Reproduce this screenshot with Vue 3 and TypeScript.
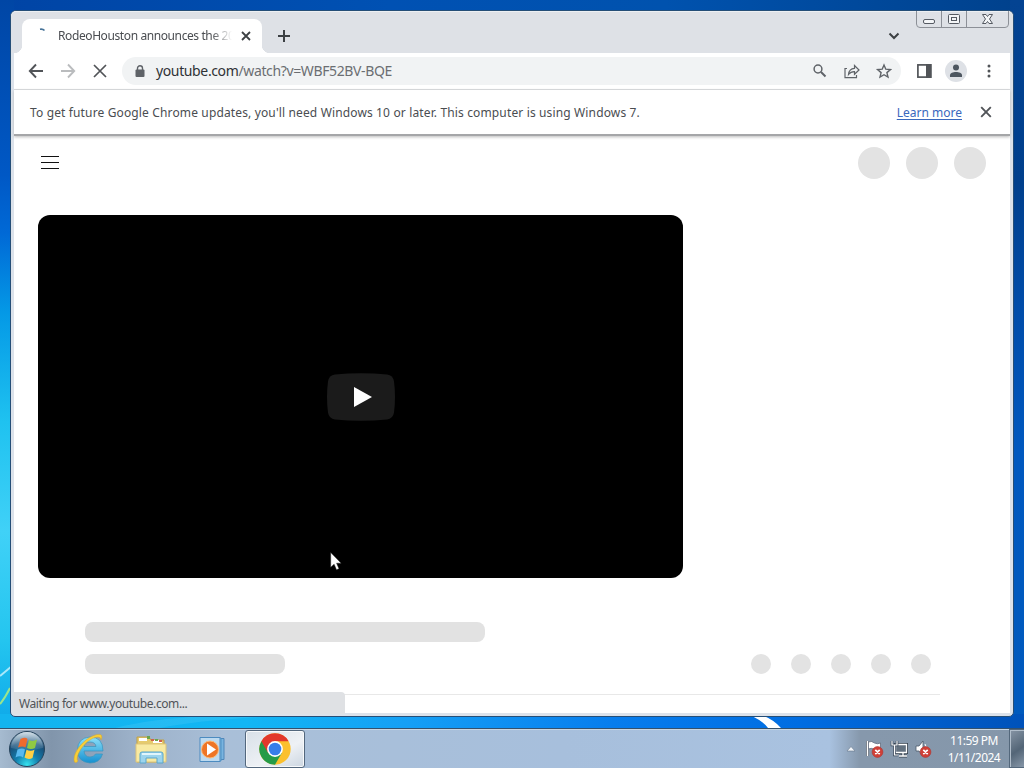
<script setup lang="ts">
const title = 'RodeoHouston announces the 20'
const headerDots: number[] = [1, 2, 3]
const actionDots: number[] = [1, 2, 3, 4, 5]
</script>

<template>
  <div class="desktop">
    <div class="wallpaper">
      <svg class="streaks" width="1024" height="728" viewBox="0 0 1024 728">
        <path d="M0 676 Q6 671 12 666" stroke="#a9e8fa" stroke-width="2" fill="none" />
        <path d="M0 704 Q5 698 10 688" stroke="#9be58c" stroke-width="2" fill="none" />
        <path d="M115 728 Q150 719 205 716 L280 716 Q200 720 160 728Z" fill="#5cd1f6" opacity=".25" />
        <path d="M752 716 L764 716 Q774 720 781 728 L768 728 Q764 722 752 716Z" fill="#fff" />
      </svg>
      <section class="window">
        <header class="tabstrip">
          <div class="tab">
            <svg class="spinner" width="16" height="16" viewBox="0 0 16 16"><path d="M6 1.200 Q9 .7 10.500 2.600" fill="none" stroke="#477398" stroke-width="1.600" /></svg>
            <span class="tab-title">{{ title }}</span>
            <svg class="tab-close" width="10" height="10" viewBox="0 0 10 10"><path d="M1 1 9 9M9 1 1 9" stroke="#3c4043" stroke-width="1.800" /></svg>
          </div>
          <svg class="plus" width="12" height="12" viewBox="0 0 12 12"><path d="M6 0V12M0 6H12" stroke="#3c4043" stroke-width="2" /></svg>
          <svg class="chevron" width="12" height="8" viewBox="0 0 12 8"><path d="m1.500 1.500 4.500 4.500 4.500-4.500" fill="none" stroke="#3c4043" stroke-width="2" /></svg>
          <svg class="caption" width="94" height="18" viewBox="0 0 94 18">
            <path d="M.5 0V13Q.5 16.500 4 16.500H89Q92.500 16.500 92.500 13V0M25.500 0V16.500M50.500 0V16.500" fill="none" stroke="#8c9097" />
            <g fill="#f3f5f7" stroke="#555a62" stroke-width="1">
              <rect x="7.500" y="8.500" width="11" height="4" rx="1.500" />
              <rect x="32.500" y="3.500" width="11" height="9" rx="1" /><rect x="35.500" y="6.500" width="5" height="3" />
              <path d="M66.500 3.500h3.500l1.500 2 1.500-2h3.500l-3 4.500 3 4.500h-3.500l-1.500-2-1.500 2h-3.500l3-4.500z" />
            </g>
          </svg>
        </header>
        <div class="toolbar">
          <svg class="nav" width="92" height="20" viewBox="0 0 92 20" fill="none" stroke="#515458" stroke-width="1.900">
            <path d="M15 10H2M8 3.500 1.800 10 8 16.500" /><path d="M33 10H46M40 3.500 46.200 10 40 16.500" stroke="#babcbe" /><path d="M66 4 78 16M78 4 66 16" stroke-width="1.700" />
          </svg>
          <div class="omnibox">
            <svg class="lock" width="10" height="13" viewBox="0 0 10 13"><rect x=".500" y="4.500" width="9" height="7.500" rx="1" fill="#5f6368" /><path d="M2.500 5V3.300a2.500 2.500 0 0 1 5 0V5" fill="none" stroke="#5f6368" stroke-width="1.400" /></svg>
            <span class="url"><b>youtube.com</b>/watch?v=WBF52BV-BQE</span>
            <svg class="omni-icons" width="80" height="18" viewBox="0 0 80 18" fill="none" stroke="#5f6368" stroke-width="1.500">
              <circle cx="6" cy="7" r="3.900" /><path d="m9 10 4.500 4.500" stroke-width="1.900" />
              <path d="M35 6.500H33V15.700H44.500V13" stroke-width="1.200" /><path d="M36.500 12.500Q37 6.700 42.500 6.300V3.500L47 8l-4.500 4.300V9.600Q38.800 9.500 36.500 12.500Z" stroke-width="1.200" />
              <path d="m72 3 1.800 4.200 4.600.4-3.500 3 1.100 4.500-4-2.400-4 2.400 1.100-4.500-3.500-3 4.600-.4z" stroke-width="1.400" />
            </svg>
          </div>
          <svg class="side" width="15" height="14" viewBox="0 0 15 14"><rect x=".9" y=".9" width="12.800" height="12.200" fill="#fff" stroke="#515458" stroke-width="1.700" /><path d="M9 0h5.500v14H9z" fill="#515458" /></svg>
          <span class="avatar"><svg width="14" height="14" viewBox="0 0 14 14" fill="#4d5660"><circle cx="7" cy="3.500" r="3" /><path d="M1 13V11.200C1 8.900 4 8 7 8s6 .9 6 3.200V13z" /></svg></span>
          <svg class="kebab" width="4" height="14" viewBox="0 0 4 14" fill="#515458"><circle cx="2" cy="2" r="1.500" /><circle cx="2" cy="7" r="1.500" /><circle cx="2" cy="12" r="1.500" /></svg>
        </div>
        <div class="infobar">
          <span class="notice">To get future Google Chrome updates, you'll need Windows 10 or later. This computer is using Windows 7.</span>
          <a class="learn">Learn more</a>
          <svg class="dismiss" width="12" height="12" viewBox="0 0 12 12"><path d="M1.200 1.200 10.800 10.800M10.800 1.200 1.200 10.800" stroke="#515458" stroke-width="1.900" /></svg>
        </div>
        <main class="page">
          <div class="masthead">
            <div class="burger"><i /><i /><i /></div>
            <div class="head-dots"><i v-for="d in headerDots" :key="d" /></div>
          </div>
          <div class="player">
            <svg width="68" height="48" viewBox="0 0 68 48"><path d="M8 1.500Q34-1 60 1.500q6 .7 7 7 2 15.500 0 31-1 6.300-7 7-26 2.500-52 0-6-.7-7-7-2-15.500 0-31 1-6.300 7-7Z" fill="#1b1b1b" /><path d="M27 14 45 24 27 34z" fill="#fff" /></svg>
          </div>
          <div class="bar wide" />
          <div class="meta"><div class="bar narrow" /><div class="action-dots"><i v-for="d in actionDots" :key="d" /></div></div>
          <div class="rule" />
        </main>
        <div class="status">Waiting for www.youtube.com...</div>
      </section>
      <svg class="cursor" width="13" height="19" viewBox="0 0 13 19"><path d="M.7.500V15.300L4.100 12.200 6.500 17.800 9 16.700 6.600 11.200H11.200Z" fill="#fff" stroke="#222" stroke-width=".5" /></svg>
    </div>
    <footer class="taskbar">
      <svg class="start" width="38" height="38" viewBox="0 0 38 38">
        <defs>
          <radialGradient id="orb" cx=".5" cy=".95" r=".95"><stop stop-color="#35e3ef" /><stop offset=".35" stop-color="#137fae" /><stop offset=".7" stop-color="#1a4f78" /><stop offset="1" stop-color="#8ba7bb" /></radialGradient>
          <linearGradient id="shine" x2="0" y2="1"><stop stop-color="#e1eaf0" stop-opacity=".85" /><stop offset="1" stop-color="#8fb0c5" stop-opacity=".15" /></linearGradient>
        </defs>
        <circle cx="19" cy="19" r="17.500" fill="url(#orb)" stroke="#26435b" /><path d="M3 18a16 16 0 0 1 32 0Q19 22 3 18Z" fill="url(#shine)" />
        <path d="M12.500 9q5-2.500 7 0l-2 8.500q-3-2-7.500 0Z" fill="#ee6a2e" /><path d="M21 10q4 2 8-.5l-2 8.500q-4 2-8 0Z" fill="#90c943" />
        <path d="M9.500 19.500q5-2 7.500 0l-2 8q-3-2.500-7.500 0Z" fill="#58b9ef" /><path d="M18.500 19.700q4 2 8 0l-2 8.300q-4 2-8-.5Z" fill="#ffd044" />
      </svg>
      <svg class="ie" width="32" height="32" viewBox="0 0 32 32">
        <defs><linearGradient id="blue" x2="0" y2="1"><stop stop-color="#8be0fa" /><stop offset="1" stop-color="#1590d0" /></linearGradient></defs>
        <path d="M30 18H11q.5 6 6 6 4 0 5.500-3h7Q27 30 17 30 4.500 29 4.500 17T17 4Q30 4 30 18ZM11 13.500H23q-.7-4.500-6-4.500t-6 4.500Z" fill="url(#blue)" stroke="#3a94bc" stroke-width=".7" />
        <path d="M1.500 29C-1 22 7 11 15 5.500 20 2 27 0 28.500 2.500q.8 2-.5 4.500 0-3-3-3Q20 4 14 9 6.500 16 4.500 23 3.500 27 5 28q-2 2.500-3.500 1Z" fill="#f9ce35" stroke="#d6a62a" stroke-width=".5" />
      </svg>
      <svg class="folder" width="33" height="30" viewBox="0 0 33 30">
        <path d="M2 2h12l2 3h13v22H2z" fill="#e6cb6d" stroke="#bea04a" /><path d="M4 3h8v3H4zM18 5h9v3h-9z" fill="#fff" /><path d="M12 1h3v3h-3zM20 4h3v2h-3z" fill="#6aa64c" /><path d="M16 4h3v2h-3zM24 5h3v2h-3z" fill="#d0624b" />
        <path d="M1 9h30v18H1z" fill="#f8eaa2" stroke="#dfc578" /><path d="M5 28V19q0-2 2-2h19q2 0 2 2v9h-6v-5H11v5z" fill="#9cd4ed" stroke="#5aa6cc" /><path d="M7 19h19" stroke="#e0f5fc" stroke-width="2" />
      </svg>
      <svg class="media" width="28" height="27" viewBox="0 0 28 27">
        <path d="M6 2.500h19v21H6z" fill="#79b4df" stroke="#5087b9" /><path d="M4 2h18v23H4z" fill="#9acbea" stroke="#4e91c5" /><path d="M1 1.500h20v24H1z" fill="#bddaf0" stroke="#4c8bc0" />
        <circle cx="11" cy="13.500" r="8.500" fill="#ee7526" stroke="#fbba78" /><path d="M8 7.500v12l9-6z" fill="#fff" />
      </svg>
      <div class="task-active">
        <svg width="32" height="32" viewBox="0 0 32 32">
          <circle cx="16" cy="16" r="15.700" fill="#fbc02d" />
          <path d="M16 16 2.400 8.150A15.700 15.700 0 0 0 16 31.700L22.800 19.900Z" fill="#259b48" />
          <path d="M2.400 8.150A15.700 15.700 0 0 1 29.600 8.150H16L9.200 19.900Z" fill="#e2372b" />
          <circle cx="16" cy="16" r="7.900" fill="#fff" /><circle cx="16" cy="16" r="6.300" fill="#377ee9" />
        </svg>
      </div>
      <div class="tray">
        <svg width="92" height="20" viewBox="0 0 92 20">
          <path d="M1 12H9L5 7.500Z" fill="#f4f7fa" stroke="#67778b" stroke-width=".6" />
          <path d="M21.500 2v15" stroke="#3b4555" stroke-width="3" /><path d="M21.500 2v15" stroke="#fff" stroke-width="1.700" /><path d="M22.500 3q3-1.500 6 1 3 1.500 6 0v7q-3 1-6-.5-3-2-6-.5Z" fill="#fff" stroke="#596375" stroke-width=".7" />
          <path d="M49.500 5.500h11v8h-11zM53 17h8M57 14v3" fill="#506070" stroke="#35404c" stroke-width="3" /><path d="M49.500 5.500h11v8h-11zM53 17h8M57 14v3" fill="#63717f" stroke="#fff" stroke-width="1.300" /><path d="M46 2v4h5V2M48.500 6v10H52" fill="none" stroke="#334255" stroke-width="2.600" /><path d="M46 2v4h5V2M48.500 6v10H52" fill="none" stroke="#fff" stroke-width="1.200" />
          <path d="M70 7h3l4-5v15l-4-5h-3z" fill="#fff" stroke="#49586a" stroke-width=".8" /><path d="M79 5q3 4 0 8" fill="none" stroke="#fff" />
          <g fill="#cf4038" stroke="#b0302c" stroke-width=".6"><circle cx="31.500" cy="13" r="5.400" /><circle cx="79.500" cy="13" r="5.400" /></g>
          <path d="m29.300 10.800 4.400 4.400m0-4.400-4.400 4.400M77.300 10.800l4.400 4.400m0-4.400-4.400 4.400" stroke="#fff" stroke-width="1.700" />
        </svg>
        <div class="clock"><span>11:59 PM</span><span class="date">1/11/2024</span></div>
        <div class="peek" />
      </div>
    </footer>
  </div>
</template>

<style>
body { margin: 0; overflow: hidden; }
</style>

<style scoped>
* { box-sizing: border-box; }
svg { display: block; flex: none; }
.desktop { width: 1024px; height: 768px; display: flex; flex-direction: column; font-family: "Noto Sans", "Open Sans", sans-serif; font-size: 12px; color: #4a4d51; }
.wallpaper {
  position: relative; height: 728px; padding: 10px 10px 11px 10px;
  background:
    linear-gradient(90deg, #13b4ef 0, #12b6f4 24%, #159ff5 40%, #077ded 60%, #006de2 78%, #0052ba) 0 100% / 100% 14px no-repeat,
    linear-gradient(#0046a5, #0058c5 24%, #0069d6 32%, #0499e6 43%, #1fc2f0 58%, #40d1f7 73%, #24c5ef 88%, #0da7e9) 0 0 / 14px 100% no-repeat,
    linear-gradient(#044392, #003f8c 25%, #004ca9 42%, #0058bf 62%, #005abd) 100% 0 / 14px 100% no-repeat,
    linear-gradient(90deg, #0044a5, #0051b3 38%, #0052ae 65%, #00418c);
}
.streaks { position: absolute; inset: 0; }
.window { position: relative; width: 1004px; height: 707px; display: flex; flex-direction: column; overflow: hidden; padding: 0 3px 3px; border: 1px solid #254e77; border-radius: 6px 6px 5px 5px; background: #dce2ea; }
.tabstrip { display: flex; height: 42px; margin: 0 -3px; padding: 8px 0 0 11px; background: #dee1e6; border-radius: 5px 5px 0 0; box-shadow: inset 0 1px #edf0f3; }
.tab { position: relative; width: 240px; height: 34px; display: flex; align-items: center; padding: 0 11px 0 12px; border-radius: 8px 8px 0 0; background: #fff; }
.tab::before, .tab::after { content: ""; position: absolute; bottom: 0; width: 8px; height: 8px; }
.tab::before { left: -8px; background: radial-gradient(circle at 0 0, transparent 8px, #fff 8.500px); }
.tab::after { right: -8px; background: radial-gradient(circle at 100% 0, transparent 8px, #fff 8.500px); }
.spinner { margin-top: -1px; }
.tab-title { width: 174px; margin: -2px 0 0 8px; overflow: hidden; white-space: nowrap; letter-spacing: -.4px; mask-image: linear-gradient(90deg, #000 88%, transparent); }
.tab-close { margin-left: auto; }
.plus { margin: 11px 0 0 16px; }
.chevron { margin: 13px 0 0 auto; }
.caption { margin: -8px 3px 0 16px; }
.toolbar { display: flex; align-items: center; height: 37px; padding: 0 17px 0 14px; border-bottom: 1px solid #d9dbde; background: #fff; flex: none; }
.omnibox { width: 779px; height: 28px; margin-left: 2px; padding: 0 10px 0 13px; display: flex; align-items: center; border-radius: 14px; background: #f1f3f4; }
.url { margin: -2px 0 0 11px; font-size: 14px; letter-spacing: -.37px; color: #6b6e72; white-space: nowrap; }
.url b { font-weight: 400; color: #2f3236; }
.omni-icons { margin-left: auto; margin-right: -1px; }
.side { margin-left: 16px; }
.avatar { width: 22px; height: 22px; display: grid; place-items: center; border-radius: 50%; background: #dee1e6; margin-left: 13px; }
.kebab { margin-left: 20px; }
.infobar { position: relative; z-index: 1; display: flex; align-items: center; height: 46px; padding: 0 18px 0 16px; border-bottom: 2px solid #a5a6a8; background: #fff; box-shadow: 0 1px 3px #bbb; flex: none; white-space: nowrap; }
.notice { letter-spacing: .14px; padding-top: 1px; }
.learn { margin-left: auto; padding-top: 1px; color: #3a68bd; text-decoration: underline; text-underline-offset: 2px; }
.dismiss { margin-left: 18px; }
.page { flex: 1; min-height: 0; padding: 0 24px; background: #fff; }
.masthead { height: 79px; display: flex; justify-content: space-between; padding-top: 11px; }
.burger { width: 18px; display: flex; flex-direction: column; gap: 5px; margin: 9px 0 0 3px; }
.burger i { height: 1px; background: #111; }
.head-dots, .action-dots { display: flex; }
.head-dots { gap: 16px; }
.head-dots i, .action-dots i { width: 32px; height: 32px; border-radius: 50%; background: #e3e3e3; }
.player { width: 645px; height: 363px; display: grid; place-items: center; background: #000; border-radius: 12px; }
.bar { height: 20px; border-radius: 8px; background: #e2e2e2; }
.wide { width: 400px; margin: 44px 0 0 47px; }
.meta { height: 20px; display: flex; justify-content: space-between; margin: 12px 55px 0 47px; }
.narrow { width: 200px; }
.action-dots { gap: 20px; }
.action-dots i { width: 20px; height: 20px; }
.rule { height: 1px; margin: 20px 46px 0 47px; background: #e8e8e8; }
.status { position: absolute; left: 2px; bottom: 2px; width: 332px; height: 22px; padding: 1px 0 0 6px; border-radius: 0 4px 0 0; background: #dfe1e4; line-height: 22px; color: #505458; white-space: nowrap; letter-spacing: -.4px; }
.cursor { position: absolute; left: 330px; top: 552px; }
.taskbar { display: flex; align-items: center; height: 40px; border-top: 1px solid #34516d; box-shadow: inset 0 1px #c7d6e4; background: linear-gradient(90deg, #a6bbd0, #8195ab 5%, #9cb1c9 13%, #a9bfd8 22%, #a7bfdc 55%, #a9c2e0 81%, #8698ac 84%, #8597aa); }
.start { margin-left: 8px; }
.ie { margin-left: 27px; }
.folder { margin: 2px 0 0 30px; }
.media { margin: 2px 0 0 31px; }
.task-active { width: 60px; height: 38px; margin-left: 18px; display: grid; place-items: center; border: 1px solid #53677d; border-radius: 3px; background: linear-gradient(150deg, #d8e0e8, #eef1f5 60%, #ccd6e1); box-shadow: inset 0 0 0 1px #f7f9fb; }
.tray { height: 39px; display: flex; align-items: center; margin-left: auto; }
.clock { width: 56px; margin-left: 8px; display: flex; flex-direction: column; align-items: center; color: #fff; line-height: 17px; white-space: nowrap; letter-spacing: -.5px; }
.peek { width: 15px; height: 39px; margin-left: 7px; border: 1px solid #53677b; border-right: 0; box-shadow: inset 1px 1px #b0bdca; background: linear-gradient(145deg, #8795a5, #536577 55%, #8797a8); }
</style>
